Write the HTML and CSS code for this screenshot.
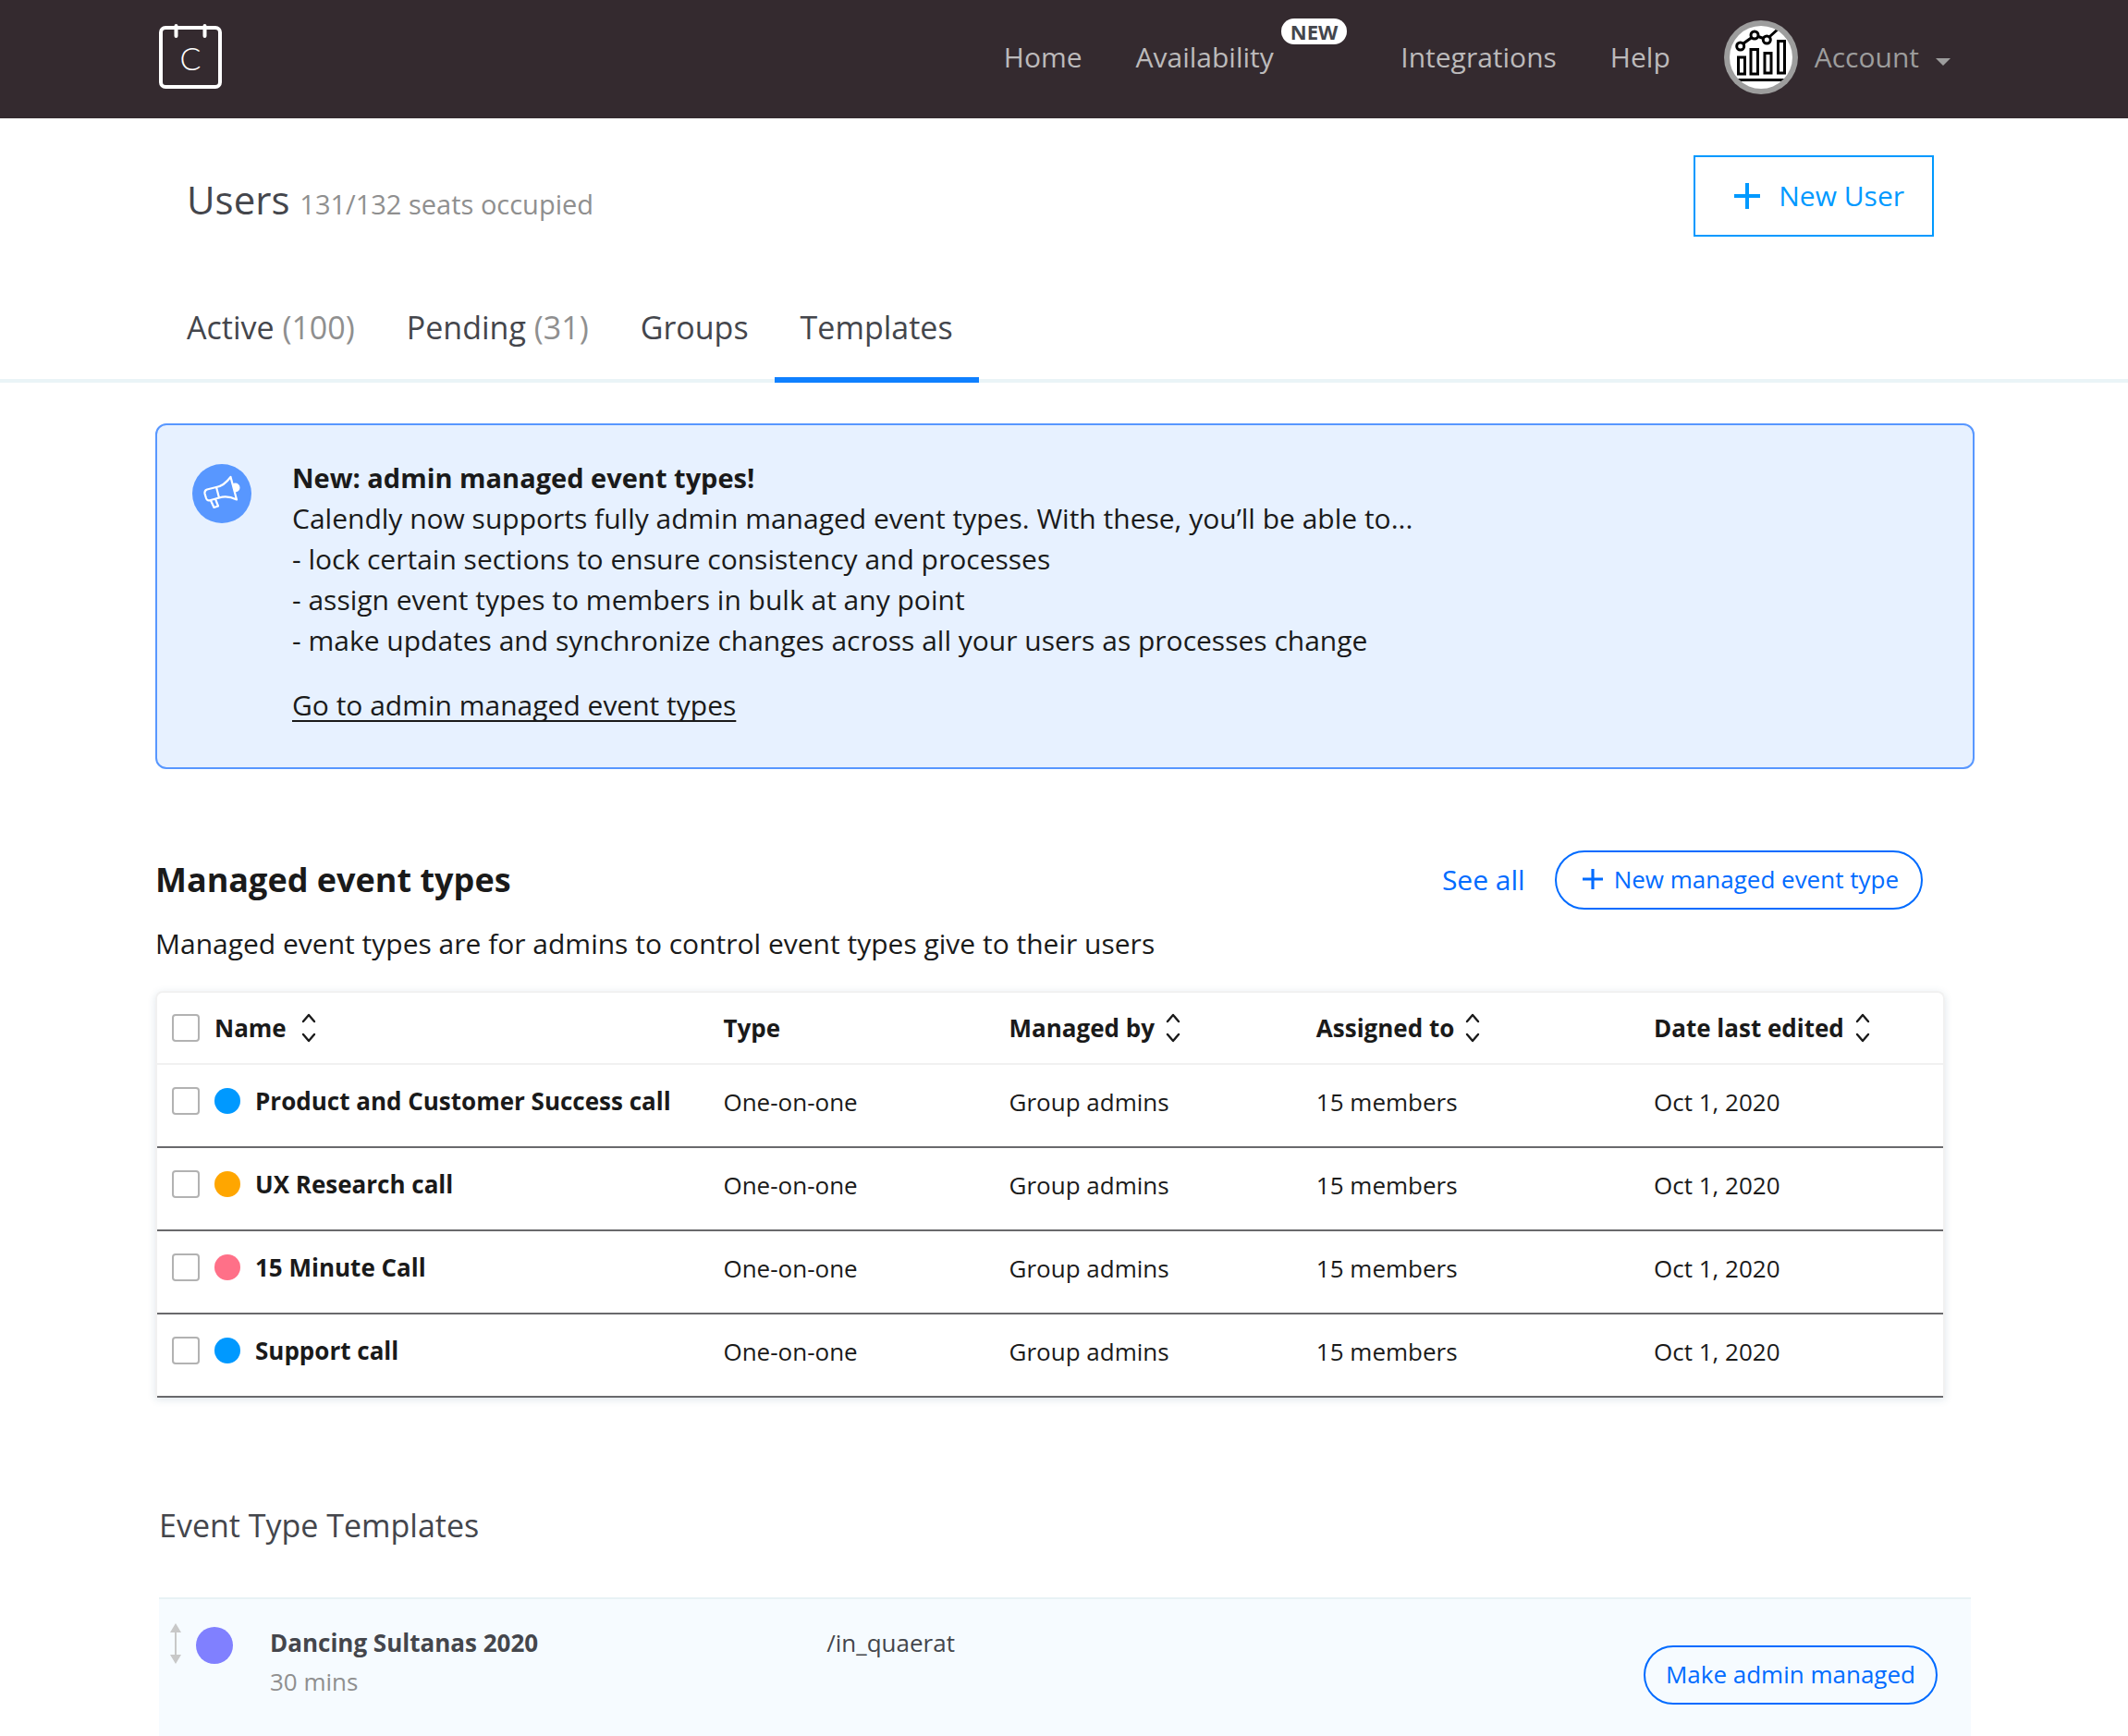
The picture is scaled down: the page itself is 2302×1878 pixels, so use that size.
FILE: index.html
```html
<!DOCTYPE html>
<html lang="en">
<head>
    <meta charset="UTF-8">
    <meta name="viewport" content="width=device-width, initial-scale=1">
    <title>Users - Templates</title>
    <link rel="stylesheet" href="styles.css">
</head>
<body>
    <svg class="sprite" aria-hidden="true">
        <symbol id="icon-sort" viewBox="0 0 16 32">
            <path d="M2 9L8 2L14 9M2 23L8 30L14 23" fill="none" stroke="currentColor" stroke-width="2.4" stroke-linecap="round" stroke-linejoin="round"/>
        </symbol>
        <symbol id="icon-plus" viewBox="0 0 28 28">
            <path d="M14 0V28M0 14H28" fill="none" stroke="currentColor" stroke-width="4"/>
        </symbol>
    </svg>

    <header class="header">
        <a class="logo" href="#" aria-label="Calendly">
            <svg width="68" height="72" viewBox="0 0 68 72">
                <rect x="2" y="5" width="64" height="64" rx="5" fill="none" stroke="#fff" stroke-width="4"/>
                <path d="M18.500 3V14M49.500 3V14" stroke="#fff" stroke-width="4" stroke-linecap="round"/>
                <text class="logo-letter" x="34" y="51" text-anchor="middle">C</text>
            </svg>
        </a>
        <nav class="nav">
            <a href="#">Home</a>
            <a class="nav-new" href="#">Availability <span class="badge">NEW</span></a>
            <a href="#">Integrations</a>
            <a href="#">Help</a>
            <button class="account" type="button">
                <svg class="avatar" width="80" height="80" viewBox="0 0 80 80">
                    <defs><clipPath id="avatar-clip"><circle cx="40" cy="40" r="34"/></clipPath></defs>
                    <circle cx="40" cy="40" r="40" fill="#9d9d9d"/>
                    <circle cx="40" cy="40" r="34" fill="#fff"/>
                    <g fill="none" stroke="#000" stroke-width="3" clip-path="url(#avatar-clip)">
                        <rect x="15.500" y="40" width="7" height="18"/>
                        <rect x="29" y="31.500" width="7.500" height="26.500"/>
                        <rect x="44" y="35.500" width="7" height="21.500"/>
                        <rect x="58.500" y="22.500" width="7" height="34.500"/>
                        <path d="M10 64.500H70" stroke-width="3"/>
                        <path d="M21 25L30 18.500M37 17.500L42.500 19.500M49.500 17.500L60 8"/>
                        <circle cx="17.700" cy="28" r="4"/>
                        <circle cx="33" cy="16" r="4"/>
                        <circle cx="46.300" cy="21" r="4"/>
                    </g>
                </svg>
                <span>Account</span>
                <span class="caret"></span>
            </button>
        </nav>
    </header>

    <div class="page-head">
        <h1>Users <small>131/132 seats occupied</small></h1>
        <button class="btn-user" type="button"><svg width="28" height="28"><use href="#icon-plus"/></svg>New User</button>
    </div>

    <nav class="tabs">
        <a href="#">Active <span>(100)</span></a>
        <a href="#">Pending <span>(31)</span></a>
        <a href="#">Groups</a>
        <a class="selected" href="#">Templates</a>
    </nav>

    <main class="container">
        <section class="notice">
            <svg class="notice-icon" width="64" height="64" viewBox="0 0 64 64">
                <circle cx="32" cy="32" r="32" fill="#5897ff"/>
                <circle cx="46.500" cy="25.500" r="5" fill="#fff"/>
                <path d="M26 25C32 24 37 20 41.500 14L48 38.500C41 35 35 34.500 29 36.500Z" fill="#5897ff" stroke="#fff" stroke-width="2.200" stroke-linejoin="round"/>
                <path d="M26 25L16 27.500Q13 28.500 13.500 32L15 37Q16 40 19 39.200L29 36.500" fill="none" stroke="#fff" stroke-width="2.200" stroke-linejoin="round"/>
                <path d="M20 39.500L23.500 47L28 45.500L25 37.800" fill="none" stroke="#fff" stroke-width="2.200" stroke-linejoin="round"/>
            </svg>
            <div class="notice-text">
                <h2>New: admin managed event types!</h2>
                <p>Calendly now supports fully admin managed event types. With these, you’ll be able to...</p>
                <p>- lock certain sections to ensure consistency and processes</p>
                <p>- assign event types to members in bulk at any point</p>
                <p>- make updates and synchronize changes across all your users as processes change</p>
                <a href="#">Go to admin managed event types</a>
            </div>
        </section>

        <section class="managed">
            <div class="managed-head">
                <h2>Managed event types</h2>
                <a href="#">See all</a>
                <button class="btn-pill" type="button"><svg width="22" height="22"><use href="#icon-plus"/></svg>New managed event type</button>
            </div>
            <p class="managed-text">Managed event types are for admins to control event types give to their users</p>
            <table class="table">
                <thead>
                    <tr>
                        <th class="col-name">
                            <div class="name">
                                <input type="checkbox" aria-label="Select all">
                                <button class="sort" type="button">Name <svg width="16" height="32"><use href="#icon-sort"/></svg></button>
                            </div>
                        </th>
                        <th class="col-type">Type</th>
                        <th class="col-managed"><button class="sort sort-near" type="button">Managed by <svg width="16" height="32"><use href="#icon-sort"/></svg></button></th>
                        <th class="col-assigned"><button class="sort sort-near" type="button">Assigned to <svg width="16" height="32"><use href="#icon-sort"/></svg></button></th>
                        <th><button class="sort sort-near" type="button">Date last edited <svg width="16" height="32"><use href="#icon-sort"/></svg></button></th>
                    </tr>
                </thead>
                <tbody>
                    <tr>
                        <td><div class="name"><input type="checkbox" id="row1"><span class="dot blue"></span><label for="row1">Product and Customer Success call</label></div></td>
                        <td>One-on-one</td>
                        <td>Group admins</td>
                        <td>15 members</td>
                        <td>Oct 1, 2020</td>
                    </tr>
                    <tr>
                        <td><div class="name"><input type="checkbox" id="row2"><span class="dot orange"></span><label for="row2">UX Research call</label></div></td>
                        <td>One-on-one</td>
                        <td>Group admins</td>
                        <td>15 members</td>
                        <td>Oct 1, 2020</td>
                    </tr>
                    <tr>
                        <td><div class="name"><input type="checkbox" id="row3"><span class="dot pink"></span><label for="row3">15 Minute Call</label></div></td>
                        <td>One-on-one</td>
                        <td>Group admins</td>
                        <td>15 members</td>
                        <td>Oct 1, 2020</td>
                    </tr>
                    <tr>
                        <td><div class="name"><input type="checkbox" id="row4"><span class="dot blue"></span><label for="row4">Support call</label></div></td>
                        <td>One-on-one</td>
                        <td>Group admins</td>
                        <td>15 members</td>
                        <td>Oct 1, 2020</td>
                    </tr>
                </tbody>
            </table>
        </section>

        <section class="templates">
            <h2>Event Type Templates</h2>
            <div class="template">
                <svg class="drag" width="12" height="44" viewBox="0 0 12 44">
                    <path d="M6 0L12 10H0ZM6 44L0 34H12Z" fill="#c8c8c8"/>
                    <path d="M6 8V36" stroke="#c8c8c8" stroke-width="2"/>
                </svg>
                <span class="template-color"></span>
                <div class="template-name">
                    <h3>Dancing Sultanas 2020</h3>
                    <p>30 mins</p>
                </div>
                <p class="template-link">/in_quaerat</p>
                <button class="btn-pill" type="button">Make admin managed</button>
            </div>
        </section>
    </main>
</body>
</html>
```
FILE: styles.css
```css
*{
    margin: 0;
    padding: 0;
    box-sizing: border-box;
}
body{
    font-family: "Open Sans", Lato, sans-serif;
    font-size: 30px;
    line-height: 44px;
    color: #1a1a1a;
    background: #fff;
}
a{
    color: inherit;
    text-decoration: none;
}
button{
    font: inherit;
    color: inherit;
    background: none;
    border: none;
    cursor: pointer;
}
svg{
    display: block;
    flex: none;
}
.sprite{
    position: absolute;
    width: 0;
    height: 0;
}

/* header */
.header{
    display: flex;
    align-items: center;
    justify-content: space-between;
    height: 128px;
    padding: 0 192px 4px 172px;
    background: #342a2f;
    color: #bcbabb;
}
.logo svg{
    margin-bottom: 2px;
}
.logo-letter{
    font-family: Lato, sans-serif;
    font-size: 34px;
    font-weight: 300;
    fill: #fff;
}
.nav{
    display: flex;
    align-items: center;
    gap: 58px;
}
.nav-new{
    display: flex;
    gap: 8px;
}
.badge{
    height: 28px;
    margin-top: -20px;
    padding: 0 10px;
    border-radius: 14px;
    background: #fff;
    color: #44464c;
    font-size: 22px;
    font-weight: bold;
    line-height: 28px;
}
.account{
    display: flex;
    align-items: center;
    gap: 18px;
    color: #9d9d9d;
}
.caret{
    margin-top: 10px;
    border: 8px solid transparent;
    border-top-color: #9d9d9d;
    border-bottom: none;
}

/* title and tabs */
.page-head{
    display: flex;
    align-items: center;
    justify-content: space-between;
    padding: 40px 210px 0 202px;
}
.page-head h1{
    padding-top: 12px;
    font-size: 42px;
    font-weight: normal;
    color: #44464c;
}
.page-head small{
    font-size: 29px;
    color: #8f8f8f;
}
.btn-user{
    display: flex;
    align-items: center;
    gap: 20px;
    height: 88px;
    padding: 0 30px 0 42px;
    border: 2px solid #0099ff;
    color: #0099ff;
}
.tabs{
    display: flex;
    margin-top: 60px;
    padding: 0 174px;
    border-bottom: 4px solid #eaf4f7;
    font-size: 34px;
    color: #44464c;
}
.tabs a{
    height: 98px;
    margin-bottom: -4px;
    padding: 16px 28px 0;
}
.tabs span{
    color: #8f8f8f;
}
.tabs .selected{
    border-bottom: 6px solid #0f80ff;
}

/* notice */
.container{
    padding: 44px 166px 0 168px;
}
.notice{
    display: flex;
    gap: 44px;
    padding: 35px 38px 45px;
    border: 2px solid #5897ff;
    border-radius: 12px;
    background: #e7f1ff;
}
.notice-icon{
    margin-top: 7px;
}
.notice h2{
    font-size: 29px;
}
.notice a{
    display: inline-block;
    margin-top: 26px;
    text-decoration: underline;
    text-decoration-thickness: 2px;
    text-decoration-skip-ink: none;
    text-underline-offset: 5px;
}

/* managed event types */
.managed-head{
    display: flex;
    align-items: center;
    margin-top: 88px;
    padding-right: 56px;
}
.managed-head h2{
    flex: 1;
    font-size: 36px;
}
.managed-head a{
    margin-right: 32px;
    color: #006bff;
}
.managed-text{
    margin: 15px 0 29px;
}
.btn-pill{
    display: flex;
    align-items: center;
    gap: 12px;
    height: 64px;
    padding: 0 22px 2px;
    border: 2px solid #006bff;
    border-radius: 32px;
    color: #006bff;
    font-size: 26px;
}
.managed-head .btn-pill{
    padding: 0 24px 2px 28px;
}
.table{
    width: calc(100% - 32px);
    table-layout: fixed;
    border: 2px solid #f1f1f1;
    border-bottom: none;
    border-radius: 8px 8px 0 0;
    border-spacing: 0;
    box-shadow: 0 2px 8px rgba(40, 90, 120, .15);
    font-size: 26px;
}
.col-name{
    width: 31.7%;
}
.col-type{
    width: 16%;
}
.col-managed{
    width: 17.2%;
}
.col-assigned{
    width: 18.9%;
}
.table th{
    height: 78px;
    border-bottom: 2px solid #f1f1f1;
    text-align: left;
}
.table td{
    height: 90px;
    padding-bottom: 8px;
    border-bottom: 2px solid #69696c;
}
.table td:first-child{
    padding-bottom: 10px;
}
.name{
    display: flex;
    align-items: center;
    gap: 16px;
    padding-left: 16px;
}
.name input{
    appearance: none;
    width: 30px;
    height: 30px;
    border: 2px solid #b2b2b2;
    border-radius: 4px;
    background: #fff;
}
.name input:checked{
    background: #006bff;
}
.name label{
    font-weight: bold;
}
.sort{
    display: flex;
    align-items: center;
    gap: 16px;
    font-weight: bold;
}
.sort-near{
    gap: 12px;
}
.dot{
    width: 28px;
    height: 28px;
    border-radius: 50%;
}
.blue{
    background: #0099ff;
}
.orange{
    background: #ffa600;
}
.pink{
    background: #ff7088;
}

/* templates */
.templates{
    margin-top: 116px;
    padding: 0 4px;
}
.templates h2{
    font-size: 34px;
    font-weight: normal;
    color: #44464c;
}
.template{
    display: flex;
    align-items: flex-start;
    height: 150px;
    margin-top: 56px;
    padding: 26px 36px 0 12px;
    border-top: 2px solid #e8f2f5;
    background: #f6fbff;
    color: #44464c;
    font-size: 26px;
    line-height: 42px;
}
.template-color{
    width: 40px;
    height: 40px;
    margin: 4px 50px 0 16px;
    margin-right: 40px;
    border-radius: 50%;
    background: #8080ff;
}
.template h3{
    font-size: 26px;
}
.template-name{
    flex: 0 0 31.5%;
}
.template-name p{
    color: #8f8f8f;
}
.template-link{
    flex: 1;
}
.template .btn-pill{
    margin-top: 24px;
}
```
